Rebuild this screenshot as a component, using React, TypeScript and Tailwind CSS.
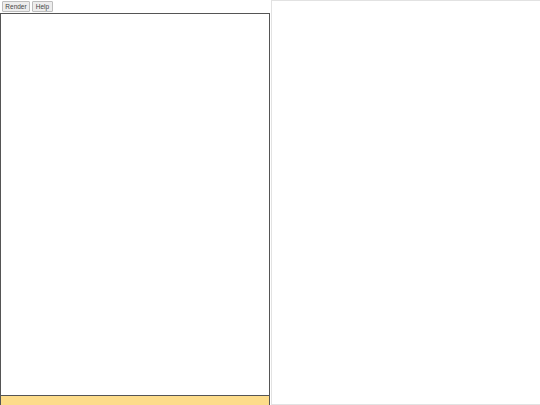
export default function App() {
  return (
    <div className="flex h-[405px] w-[540px] bg-white font-['Liberation_Sans',Arial,sans-serif]">
      {/* editor side */}
      <div className="flex w-[270px] flex-col">
        <div className="flex h-[13px] items-start gap-[2px] pl-[2px] pt-[1px]">
          <button className="h-[11px] w-[28px] rounded-[1px] border border-[#bdbdbd] bg-[#ededed] p-0 text-[6.5px] leading-[9px] text-[#444]">
            Render
          </button>
          <button className="h-[11px] w-[21px] rounded-[1px] border border-[#bdbdbd] bg-[#ededed] p-0 text-[6.5px] leading-[9px] text-[#444]">
            Help
          </button>
        </div>
        <div className="flex flex-1 flex-col border border-b-0 border-[#555]">
          <div className="flex-1 bg-white" />
          <div className="h-[10px] border-t border-[#555] bg-[#fddc8a]" />
        </div>
      </div>
      {/* preview side */}
      <div className="ml-[1px] flex-1 border border-r-0 border-[#e2e2e2] bg-white" />
    </div>
  );
}
